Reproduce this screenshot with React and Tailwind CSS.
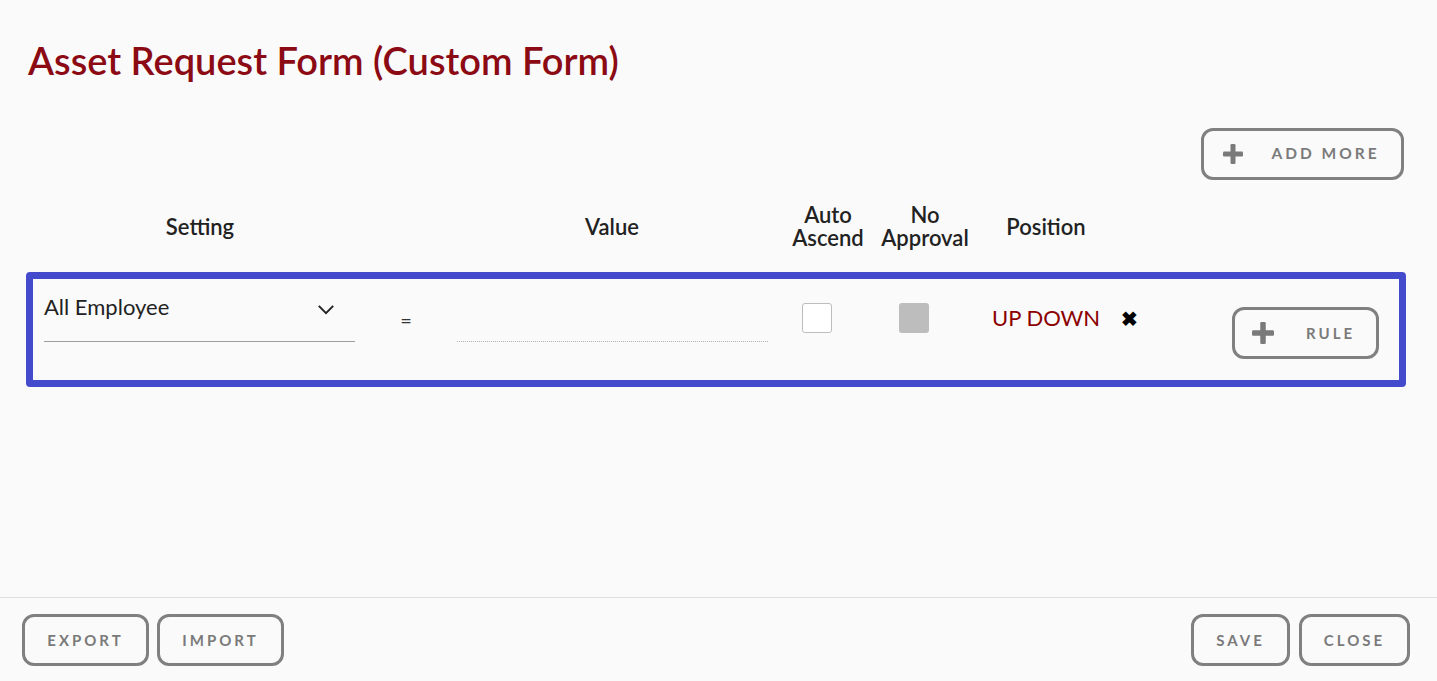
import React, { useState } from 'react';

const PlusIcon = ({ className = '' }) => (
  <svg viewBox="0 0 20 20" className={className} fill="#7a7a7a">
    <rect x="7.5" y="0" width="5" height="20" rx="1.2" />
    <rect x="0" y="7.5" width="20" height="5" rx="1.2" />
  </svg>
);

const OutlineButton = ({ children, className = '' }) => (
  <button
    type="button"
    className={`h-[52px] border-[3px] border-[#808080] rounded-[12px] bg-[#fafafa] text-[#7a7a7a] font-bold text-[15px] tracking-[0.2em] flex items-center justify-center ${className}`}
  >
    {children}
  </button>
);

const App = () => {
  const [autoAscend, setAutoAscend] = useState(false);

  return (
    <div
      className="w-[1437px] h-[681px] bg-[#fafafa] flex flex-col overflow-hidden"
      style={{ fontFamily: 'Lato, "Open Sans", sans-serif' }}
    >
      <div className="flex-1 flex flex-col">
        {/* Title */}
        <h1 className="pl-[28px] pt-[38px] text-[38px] leading-[44px] font-semibold text-[#8b0a14]">
          Asset Request Form (Custom Form)
        </h1>

        {/* Add more */}
        <div className="flex justify-end pr-[33px] mt-[46px]">
          <OutlineButton className="w-[203px] gap-[28px] pr-[2px]">
            <PlusIcon className="w-[20px] h-[20px]" />
            <span className="text-[15.5px]">ADD MORE</span>
          </OutlineButton>
        </div>

        {/* Header */}
        <div className="flex items-center mt-[22px] text-[22px] leading-[23px] font-semibold text-[#222] h-[48px]">
          <div className="w-[400px] text-center">Setting</div>
          <div className="w-[388px] pl-[36px] text-center">Value</div>
          <div className="w-[80px] text-center">Auto<br />Ascend</div>
          <div className="w-[114px] text-center">No<br />Approval</div>
          <div className="w-[128px] text-center">Position</div>
        </div>

        {/* Rule row */}
        <div className="ml-[26px] mr-[31px] mt-[22px] h-[115px] border-[7px] border-[#434bcc] rounded-[4px] flex">
          <div className="w-[311px] ml-[11px] mt-[13px] h-[50px] border-b border-[#9e9e9e] flex items-start justify-between">
            <span className="text-[22px] leading-[30px] text-[#222]">All Employee</span>
            <svg viewBox="0 0 20 12" className="w-[18px] h-[11px] mt-[12px] mr-[20px]" fill="none" stroke="#222" strokeWidth="2.2">
              <path d="M2 2 L10 10 L18 2" />
            </svg>
          </div>
          <div className="w-[102px] flex justify-center pt-[26px] text-[20px] text-[#333]">=</div>
          <div className="w-[311px] h-[63px] border-b border-dotted border-[#b0b0b0]" />
          <div className="w-[34px]" />
          <div className="pt-[24px]">
            <button
              type="button"
              onClick={() => setAutoAscend(!autoAscend)}
              className="w-[30px] h-[30px] border border-[#bdbdbd] rounded-[3px] bg-white block"
            />
          </div>
          <div className="w-[67px]" />
          <div className="pt-[24px]">
            <div className="w-[30px] h-[30px] rounded-[3px] bg-[#bdbdbd]" />
          </div>
          <div className="w-[63px]" />
          <div className="pt-[25px] text-[22px] leading-[28px] text-[#8b0000]">UP DOWN</div>
          <div className="pt-[27px] pl-[21px] text-[20px] leading-[24px] text-black font-bold">✖</div>
          <div className="flex-1 flex justify-end pr-[20px] pt-[28px]">
            <OutlineButton className="w-[147px] gap-[32px] pr-[4px]">
              <PlusIcon className="w-[22px] h-[22px]" />
              <span>RULE</span>
            </OutlineButton>
          </div>
        </div>
      </div>

      {/* Footer */}
      <div className="h-[84px] border-t border-[#e0e0e0] flex items-start justify-between px-[22px] pt-[16px] pr-[27px]">
        <div className="flex gap-[8px]">
          <OutlineButton className="w-[127px]">EXPORT</OutlineButton>
          <OutlineButton className="w-[127px]">IMPORT</OutlineButton>
        </div>
        <div className="flex gap-[9px]">
          <OutlineButton className="w-[99px]">SAVE</OutlineButton>
          <OutlineButton className="w-[111px]">CLOSE</OutlineButton>
        </div>
      </div>
    </div>
  );
};

export default App;
